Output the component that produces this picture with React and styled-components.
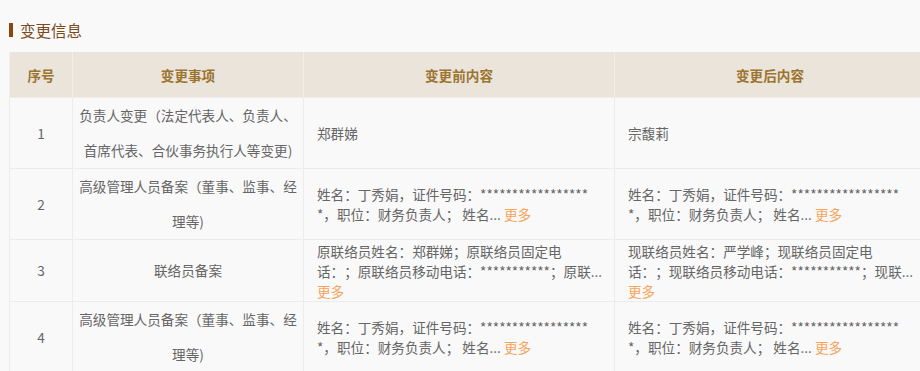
import { Fragment } from "react";
import styled, { createGlobalStyle } from "styled-components";

const Global = createGlobalStyle`
  html, body {
    margin: 0;
    padding: 0;
    background: #f9f9f9;
    overflow: hidden;
  }
  body {
    font-family: "Noto Sans CJK SC", "Noto Sans", sans-serif;
    text-spacing-trim: space-all;
  }
`;

const Page = styled.div`
  padding: 18px 0 0 9px;
  width: 940px;
`;

const Title = styled.div`
  display: flex;
  align-items: center;
  gap: 7px;
  height: 24px;
  font-size: 15.5px;
  color: #7b4a1e;
  margin-bottom: 10px;
`;

const Bar = styled.span`
  display: block;
  width: 4px;
  height: 14px;
  background: #8a4510;
`;

const Table = styled.table`
  border-collapse: collapse;
  table-layout: fixed;
  width: 916px;
  font-size: 13.6px;
  color: #666;
`;

const Head = styled.th`
  height: 45px;
  padding: 0;
  background: #ebe4da;
  color: #9b752f;
  font-weight: bold;
  text-align: center;
  border: 1px solid #f2efea;
  border-top: none;
`;

const Row = styled.tr`
  height: ${props => props.h}px;
`;

const Cell = styled.td`
  padding: 0 5px;
  border: 1px solid #ececec;
  text-align: center;
  line-height: 35px;
  vertical-align: middle;
  word-break: break-all;
`;

const TextCell = styled.td`
  padding: 0 12px 0 13px;
  border: 1px solid #ececec;
  text-align: left;
  line-height: 20px;
  vertical-align: middle;
  white-space: nowrap;
  overflow: hidden;
`;

const More = styled.span`
  color: #f7a45c;
  cursor: pointer;
`;

const row2 = ["姓名：丁秀娟，证件号码：*****************", "*，职位：财务负责人； 姓名..."];

const rows = [
  {
    no: 1,
    h: 70,
    item: "负责人变更（法定代表人、负责人、首席代表、合伙事务执行人等变更)",
    before: ["郑群娣"],
    after: ["宗馥莉"],
  },
  {
    no: 2,
    h: 70,
    item: "高级管理人员备案（董事、监事、经理等)",
    before: row2,
    after: row2,
    more: "inline",
  },
  {
    no: 3,
    h: 62,
    item: "联络员备案",
    before: ["原联络员姓名：郑群娣；原联络员固定电", "话：；原联络员移动电话：***********；原联..."],
    after: ["现联络员姓名：严学峰；现联络员固定电", "话：；现联络员移动电话：***********；现联..."],
    more: "block",
  },
  {
    no: 4,
    h: 70,
    item: "高级管理人员备案（董事、监事、经理等)",
    before: row2,
    after: row2,
    more: "inline",
  },
];

function Lines({ lines, more }) {
  return (
    <TextCell>
      {lines.map((l, i) => (
        <Fragment key={i}>
          {i > 0 && <br />}
          {l}
        </Fragment>
      ))}
      {more === "inline" && <More> 更多</More>}
      {more === "block" && (
        <>
          <br />
          <More>更多</More>
        </>
      )}
    </TextCell>
  );
}

export default function App() {
  return (
    <Page>
      <Global />
      <Title>
        <Bar />
        变更信息
      </Title>
      <Table>
        <colgroup>
          <col style={{ width: 63 }} />
          <col style={{ width: 231 }} />
          <col style={{ width: 311 }} />
          <col style={{ width: 311 }} />
        </colgroup>
        <thead>
          <tr>
            <Head>序号</Head>
            <Head>变更事项</Head>
            <Head>变更前内容</Head>
            <Head>变更后内容</Head>
          </tr>
        </thead>
        <tbody>
          {rows.map(r => (
            <Row key={r.no} h={r.h}>
              <Cell>{r.no}</Cell>
              <Cell>{r.item}</Cell>
              <Lines lines={r.before} more={r.more} />
              <Lines lines={r.after} more={r.more} />
            </Row>
          ))}
          <Row h={20}>
            <Cell />
            <Cell />
            <TextCell />
            <TextCell />
          </Row>
        </tbody>
      </Table>
    </Page>
  );
}
